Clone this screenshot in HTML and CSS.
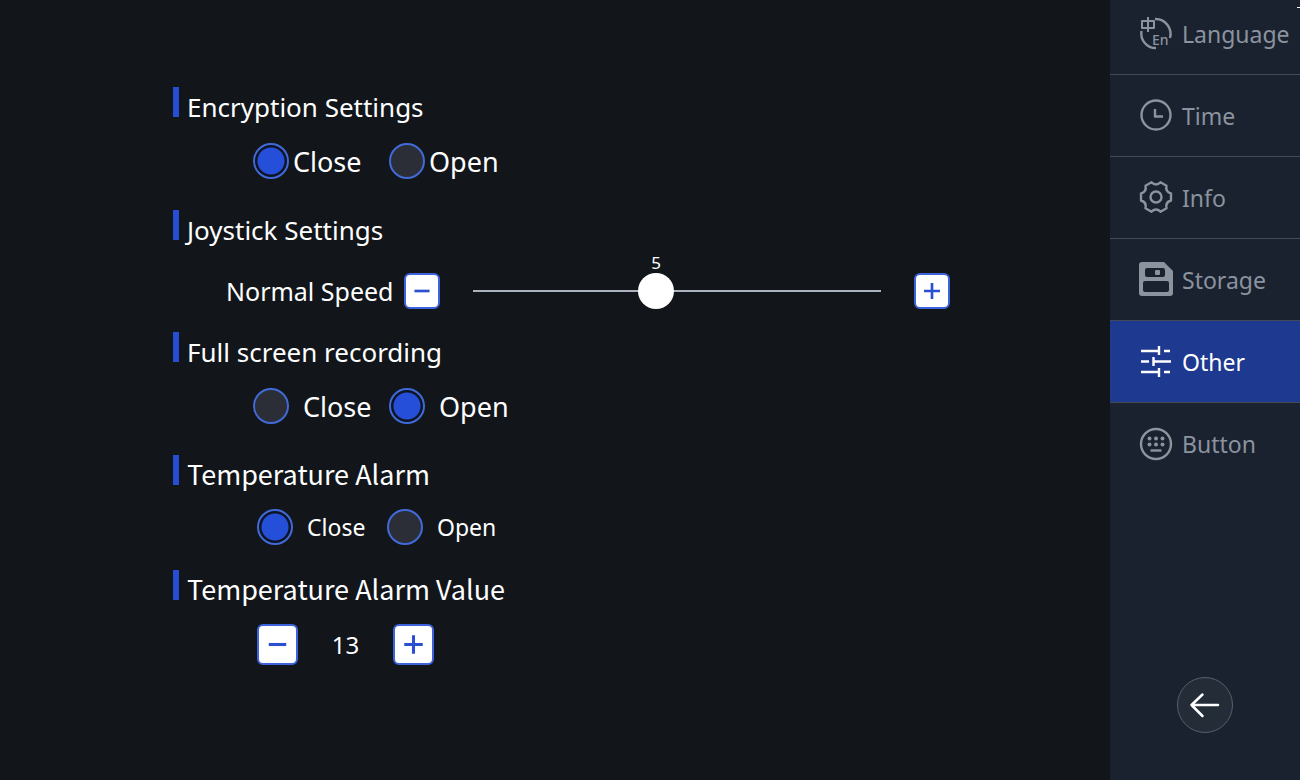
FILE: index.html
```
<!DOCTYPE html>
<html lang="en">
<head>
  <meta charset="UTF-8" />
  <meta name="viewport" content="width=device-width, initial-scale=1.0"/>
  <title>Settings | Other</title>
  <link rel="stylesheet" href="styles.css">
</head>
<body>
  <main class="settings">
    <!-- Encryption -->
    <section class="group">
      <h2 id="encryption">Encryption Settings</h2>
      <div class="row tight" role="radiogroup" aria-labelledby="encryption">
        <label class="option"><input type="radio" name="encryption" checked>Close</label>
        <label class="option"><input type="radio" name="encryption">Open</label>
      </div>
    </section>

    <!-- Joystick -->
    <section class="group joystick">
      <h2>Joystick Settings</h2>
      <div class="row speed-row">
        <label class="speed-label" for="speed">Normal Speed</label>
        <button class="step" type="button" aria-label="Slower">
          <svg viewBox="0 0 36 36"><path d="M9.5 18h17"/></svg>
        </button>
        <div class="slider">
          <input type="range" id="speed" min="1" max="10" value="5">
          <output class="bubble" for="speed" style="--pos: 0.444">5</output>
        </div>
        <button class="step" type="button" aria-label="Faster">
          <svg viewBox="0 0 36 36"><path d="M9 18h18M18 9v18"/></svg>
        </button>
      </div>
    </section>

    <!-- Recording -->
    <section class="group">
      <h2 id="recording">Full screen recording</h2>
      <div class="row" role="radiogroup" aria-labelledby="recording">
        <label class="option"><input type="radio" name="recording">Close</label>
        <label class="option"><input type="radio" name="recording" checked>Open</label>
      </div>
    </section>

    <!-- Temperature -->
    <section class="group alarm">
      <h2 id="alarm" class="cjk">Temperature Alarm</h2>
      <div class="row" role="radiogroup" aria-labelledby="alarm">
        <label class="option"><input type="radio" name="alarm" checked>Close</label>
        <label class="option"><input type="radio" name="alarm">Open</label>
      </div>
    </section>

    <section class="group alarm-value">
      <h2 class="cjk">Temperature Alarm Value</h2>
      <div class="row">
        <button class="step large" type="button" aria-label="Decrease">
          <svg viewBox="0 0 36 36"><path d="M9.5 18h17"/></svg>
        </button>
        <output class="value">13</output>
        <button class="step large" type="button" aria-label="Increase">
          <svg viewBox="0 0 36 36"><path d="M9 18h18M18 9v18"/></svg>
        </button>
      </div>
    </section>
  </main>

  <aside class="sidebar">
    <nav>
      <ul>
        <li><a href="#language">
          <svg viewBox="0 0 36 36">
            <path d="M17 3a15 15 0 0 1 15 19M18 32A14.5 14.5 0 0 1 3.5 15"/>
            <path class="thin" d="M4 5h12v7H4zM10 1v15"/>
            <text x="14" y="29">En</text>
          </svg>Language</a></li>
        <li><a href="#time">
          <svg viewBox="0 0 36 36"><circle cx="18" cy="17" r="14.5"/><path d="M17 11v7.5h8"/></svg>Time</a></li>
        <li><a href="#info">
          <svg viewBox="0 0 36 36">
            <path d="M33 13.5V20.5Q27.1 22.3 28.5 28.3L22.5 31.7Q18 27.5 13.5 31.7L7.5 28.3Q8.9 22.3 3 20.5V13.5Q8.9 11.7 7.5 5.7L13.5 2.3Q18 6.5 22.5 2.3L28.5 5.7Q27.1 11.7 33 13.5Z"/>
            <circle cx="18" cy="17" r="5.5"/>
          </svg>Info</a></li>
        <li><a href="#storage">
          <svg viewBox="0 0 36 36">
            <path class="solid" fill-rule="evenodd" d="M4 0h22l9 9v22a3 3 0 0 1-3 3H4a3 3 0 0 1-3-3V3a3 3 0 0 1 3-3zM9 6a2 2 0 0 0-2 2v5a2 2 0 0 0 2 2h16a2 2 0 0 0 2-2V8a2 2 0 0 0-2-2zM7 19a2 2 0 0 0-2 2v7a2 2 0 0 0 2 2h22a2 2 0 0 0 2-2v-7a2 2 0 0 0-2-2z"/>
            <rect class="solid" x="17" y="8" width="5" height="5" rx="1"/>
          </svg>Storage</a></li>
        <li class="active"><a href="#other">
          <svg viewBox="0 0 36 36"><path d="M3 7h18M21 2v9M26 7h6M3 17.5h8M15.5 13v9M16 17.5h17M3 28h18M21 24v9M26 28h6"/></svg>Other</a></li>
        <li><a href="#button">
          <svg viewBox="0 0 36 36">
            <circle cx="18" cy="18" r="15"/>
            <path d="M12.5 24.5h11"/>
            <g class="solid">
              <circle cx="11.5" cy="12.5" r="2"/><circle cx="18" cy="12.5" r="2"/><circle cx="24.5" cy="12.5" r="2"/>
              <circle cx="11.5" cy="18.5" r="2"/><circle cx="18" cy="18.5" r="2"/><circle cx="24.5" cy="18.5" r="2"/>
            </g>
          </svg>Button</a></li>
      </ul>
    </nav>
    <button class="back" type="button" aria-label="Back">
      <svg viewBox="0 0 54 54"><path d="M40 27H13.5M24.5 16.500L13.5 27l11 11"/></svg>
    </button>
  </aside>
</body>
</html>
```

FILE: styles.css
```
* { margin: 0; padding: 0; box-sizing: border-box; }

body {
  display: flex;
  min-height: 100vh;
  overflow-x: hidden;
  font-family: 'Noto Sans', sans-serif;
  color: white;
  background: #12161b;
}

button {
  cursor: pointer;
}

svg {
  fill: none;
  stroke: currentColor;
  stroke-width: 2;
  stroke-linejoin: round;
}

.settings {
  flex: 1;
  padding: 87px 160px 0 173px;
}

.group {
  margin-bottom: 15px;
}

h2 {
  display: flex;
  gap: 8px;
  height: 40px;
  font-size: 26px;
  font-weight: 400;
  line-height: 40px;
}

h2::before {
  content: '';
  width: 6px;
  height: 30px;
  background: #254ed4;
}

.cjk {
  font-family: 'Noto Sans CJK SC', sans-serif;
  font-size: 27px;
  line-height: 38px;
}

.row {
  display: flex;
  align-items: center;
  height: 68px;
  padding-left: 80px;
}

.option {
  display: flex;
  align-items: center;
  gap: 14px;
  width: 136px;
  font-size: 27px;
  white-space: nowrap;
  cursor: pointer;
}

.tight .option {
  gap: 4px;
}

.option input {
  appearance: none;
  flex: none;
  width: 36px;
  height: 36px;
  border: 2px solid #416ad8;
  border-radius: 50%;
  background: #2b2e36;
}

.option input:checked {
  background: radial-gradient(circle, #254fd8 13px, #0d1424 14px);
}

.joystick {
  margin-bottom: 0;
}

.speed-row {
  height: 82px;
  padding-left: 53px;
}

.speed-label {
  width: 178px;
  font-size: 25px;
  white-space: nowrap;
}

.step {
  flex: none;
  width: 36px;
  height: 36px;
  border: 2px solid #3c62dc;
  border-radius: 6px;
  color: #2a50d0;
  background: white;
}

.step svg {
  display: block;
  width: 100%;
  height: 100%;
  stroke-width: 3;
}

.step.large {
  width: 41px;
  height: 41px;
}

.slider {
  position: relative;
  flex: 1;
  max-width: 408px;
  margin: 0 33px;
}

.slider input {
  appearance: none;
  display: block;
  width: 100%;
  height: 36px;
  background: linear-gradient(#a9b2bd, #a9b2bd) center / 100% 2px no-repeat;
}

.slider input::-webkit-slider-thumb {
  appearance: none;
  width: 36px;
  height: 36px;
  border-radius: 50%;
  background: white;
}

.bubble {
  position: absolute;
  bottom: 36px;
  left: calc(18px + (100% - 36px) * var(--pos));
  transform: translateX(-50%);
  font-size: 17px;
  line-height: 20px;
}

.alarm {
  margin-bottom: 11px;
}

.alarm .row {
  height: 64px;
  padding-left: 84px;
}

.alarm .option {
  width: 130px;
  font-size: 23px;
}

.alarm-value .row {
  padding-left: 84px;
}

.value {
  width: 95px;
  font-size: 24px;
  text-align: center;
}

.sidebar {
  position: relative;
  display: flex;
  flex-direction: column;
  justify-content: space-between;
  width: 190px;
  padding-bottom: 47px;
  background: #1a2230;
}

/* small tick on the right edge */
.sidebar::after {
  content: '';
  position: absolute;
  top: 7px;
  right: 0;
  width: 3px;
  height: 1px;
  background: white;
}

.sidebar nav {
  margin-top: -7px;
}

.sidebar ul {
  list-style: none;
}

.sidebar a {
  display: flex;
  align-items: center;
  gap: 8px;
  height: 82px;
  padding-left: 28px;
  border-bottom: 1px solid #414b58;
  color: #8b939e;
  font-size: 23px;
  text-decoration: none;
}

.sidebar li:last-child a {
  border-bottom: 0;
}

.sidebar .active a {
  color: white;
  background: #1d3990;
}

.sidebar a svg {
  flex: none;
  width: 36px;
  height: 36px;
  stroke-width: 2.4;
}

.sidebar .thin {
  stroke-width: 2;
}

.sidebar .solid,
.sidebar text {
  fill: currentColor;
  stroke: none;
}

.sidebar text {
  font-size: 14px;
  font-weight: 500;
}

.back {
  width: 56px;
  height: 56px;
  margin-left: 67px;
  border: 1px solid #56606c;
  border-radius: 50%;
  color: white;
  background: #232c37;
}

.back svg {
  display: block;
  stroke-width: 2.5;
  stroke-linecap: round;
}
```
